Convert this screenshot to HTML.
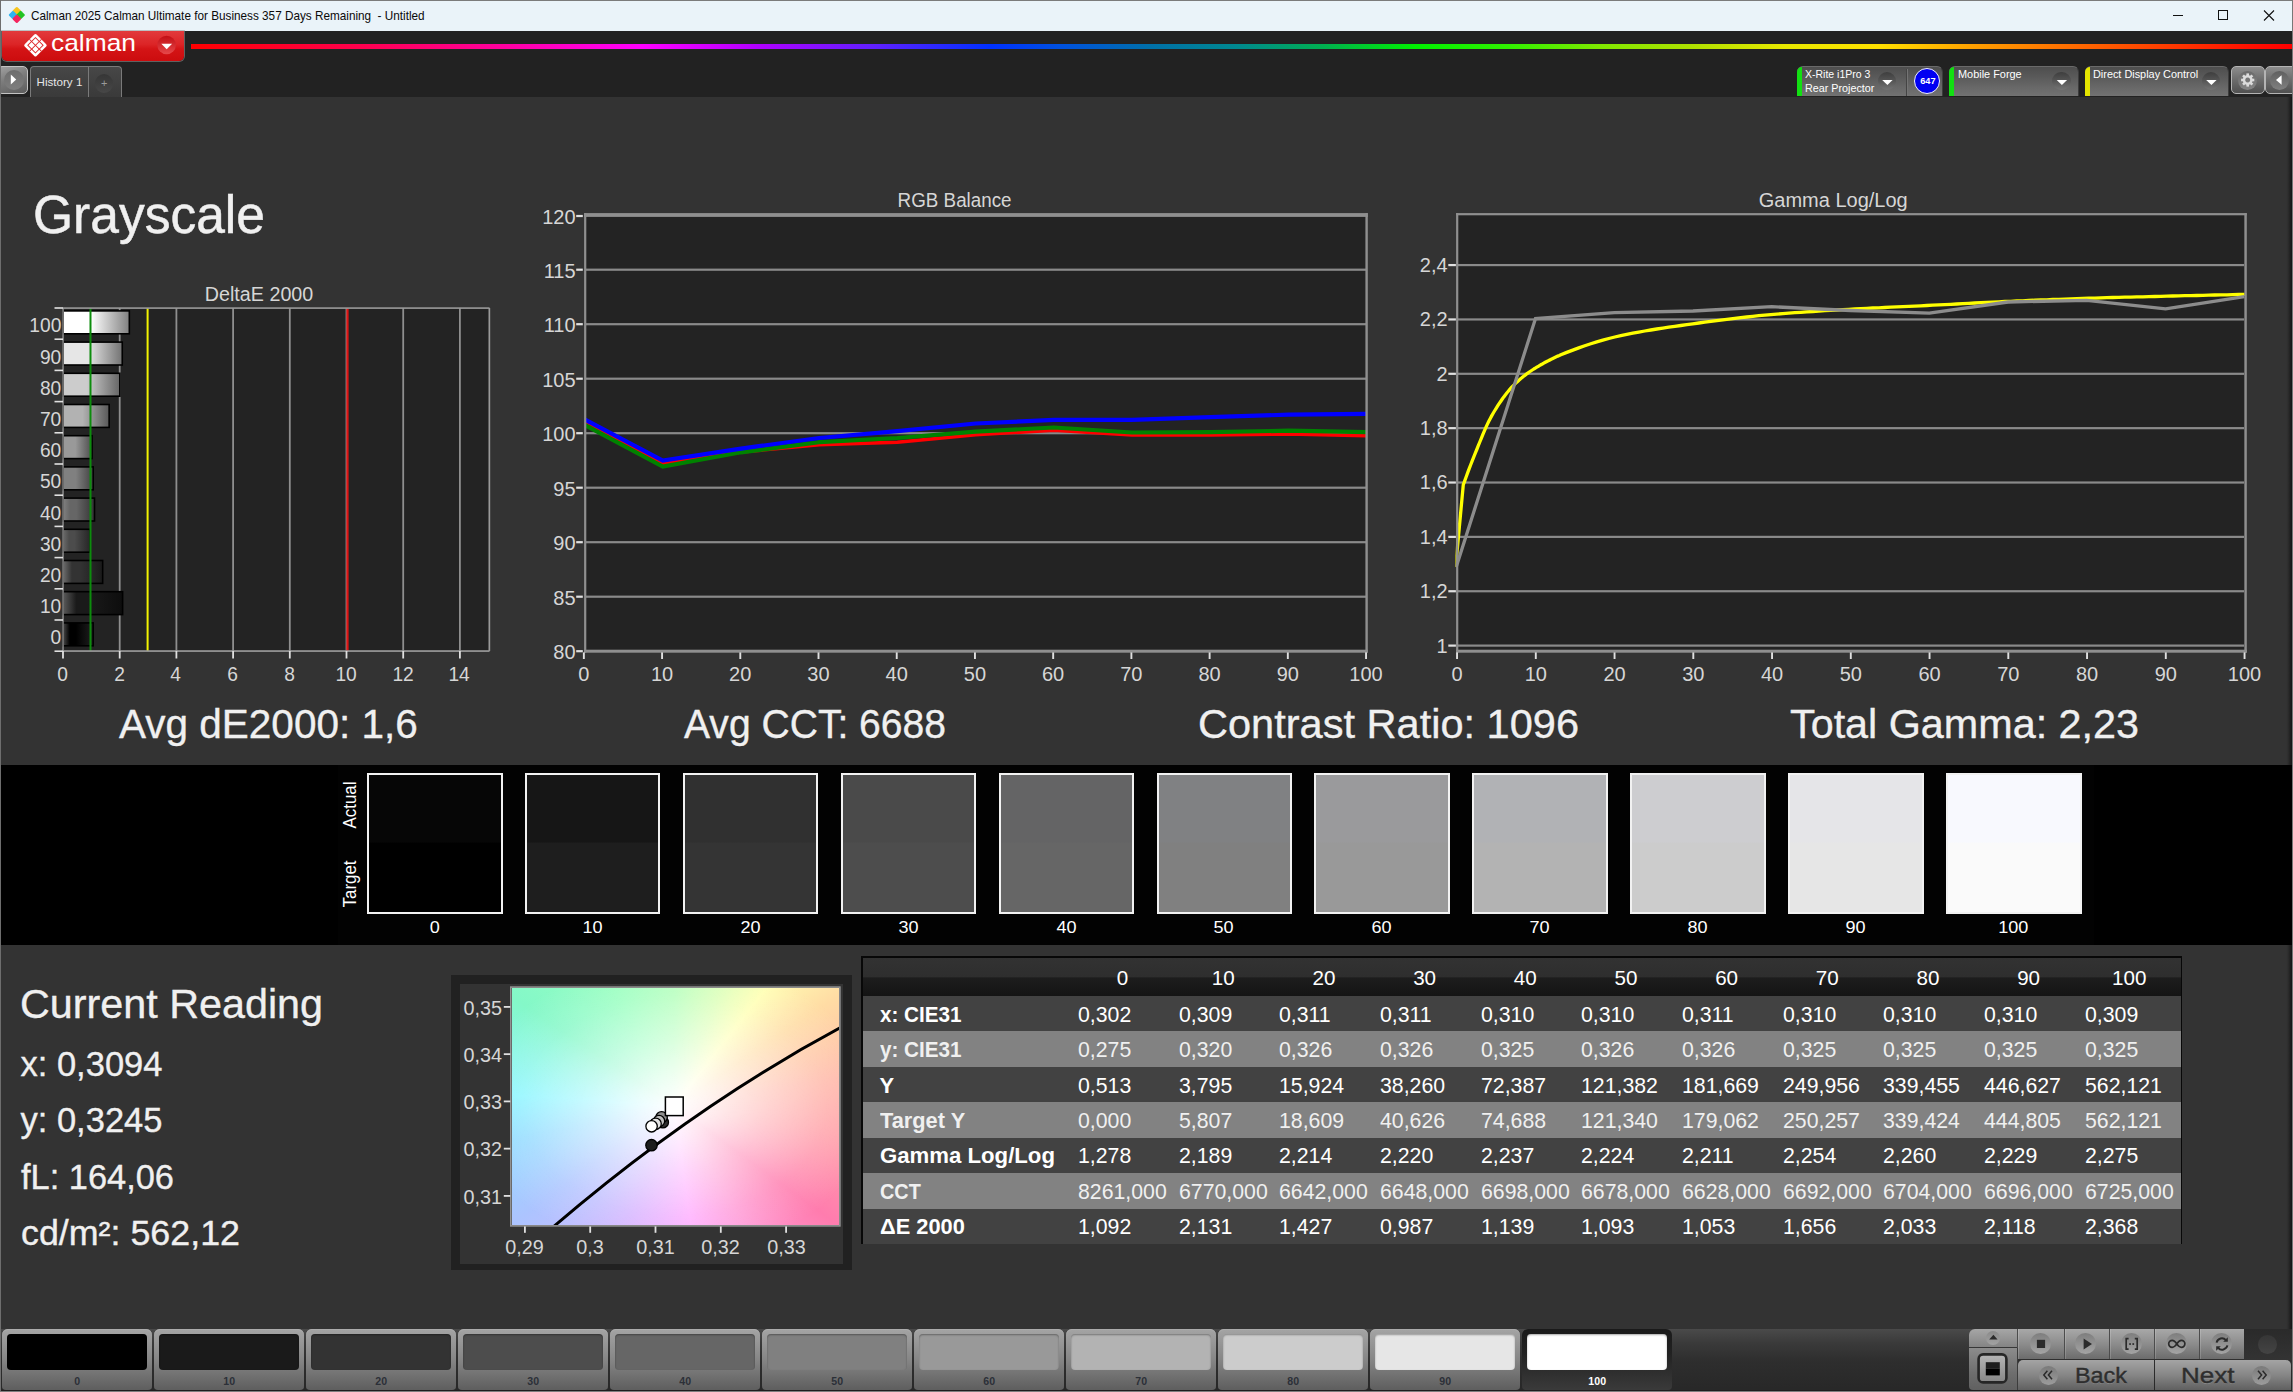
<!DOCTYPE html>
<html lang="en"><head><meta charset="utf-8"><title>Calman 2025 - Grayscale</title>
<style>
html,body{margin:0;padding:0;}
body{width:2293px;height:1392px;overflow:hidden;background:#333333;position:relative;
font-family:"Liberation Sans",sans-serif;}
.t{position:absolute;white-space:pre;display:block;z-index:10;}
.b{position:absolute;box-sizing:border-box;}
svg{position:absolute;left:0;top:0;overflow:visible;}
svg text{font-family:"Liberation Sans",sans-serif;}
</style></head><body>
<div class="b" style="left:0.00px;top:0.00px;width:2293.00px;height:31.00px;background:#eaf3f9;"></div>
<svg width="2293" height="40" viewBox="0 0 2293 40">
<g transform="translate(16.8,15) scale(0.9)">
<rect x="-3.6" y="-3.6" width="7.2" height="7.2" rx="1.2" transform="translate(0,-4.3) rotate(45)" fill="#f7c51e"/>
<rect x="-3.6" y="-3.6" width="7.2" height="7.2" rx="1.2" transform="translate(-4.3,0) rotate(45)" fill="#2fb4f0"/>
<rect x="-3.6" y="-3.6" width="7.2" height="7.2" rx="1.2" transform="translate(4.3,0) rotate(45)" fill="#22c322"/>
<rect x="-3.6" y="-3.6" width="7.2" height="7.2" rx="1.2" transform="translate(0,4.3) rotate(45)" fill="#f4245e"/>
</g>
<g stroke="#111" stroke-width="1" fill="none" shape-rendering="crispEdges">
<path d="M2173 15.5h10"/>
<rect x="2218.5" y="10.5" width="9" height="9" rx="1"/>
</g>
<path d="M2264 10.5l10 10M2274 10.5l-10 10" stroke="#111" stroke-width="1.1" fill="none"/>
</svg>
<span class="t" style="left:31.00px;top:9.67px;font-size:12.20px;line-height:12.20px;color:#0a0a0a;transform:scaleX(0.9636);transform-origin:left center;">Calman 2025 Calman Ultimate for Business 357 Days Remaining  - Untitled</span>
<div class="b" style="left:0.00px;top:31.00px;width:2293.00px;height:66.00px;background:#222222;"></div>
<div class="b" style="left:191.00px;top:43.50px;width:2101.00px;height:5.00px;background:linear-gradient(to right,#ff0000 0%,#ff0050 8.3%,#ff00a0 14.9%,#ff00ff 21.5%,#b000ff 27%,#6020ff 32.5%,#0030ff 38%,#0050e0 41.3%,#0070a8 45.7%,#008890 49.7%,#00b050 53.9%,#00f000 58.3%,#30f000 62.7%,#80e800 67.1%,#b0e000 71.5%,#e8e800 75.9%,#ffe000 80.3%,#ffa000 84.8%,#ff7000 89.1%,#ff4000 93.6%,#ff1000 98%,#ff0000 100%);"></div>
<div class="b" style="left:2.00px;top:31.00px;width:182.00px;height:30.00px;background:linear-gradient(to bottom,#e23a3c 0%,#dc2426 45%,#d41416 60%,#cc0c0e 100%);border-radius:0 0 5px 5px;box-shadow:0 0 0 1px rgba(150,150,150,.55);"></div>
<svg width="200" height="70" viewBox="0 0 200 70">
<defs><linearGradient id="ddg" x1="0" y1="0" x2="0" y2="1"><stop offset="0" stop-color="#c20e14"/><stop offset="1" stop-color="#e6484a"/></linearGradient></defs>
<g transform="translate(35.45,45.3) rotate(45)">
<rect x="-8.4" y="-8.4" width="16.8" height="16.8" rx="1.6" fill="#fff"/>
<g stroke="#dd282a" stroke-width="0.95" fill="none"><rect x="-5.4" y="-5.4" width="10.8" height="10.8"/><path d="M0,-8.6V8.6M-8.6,0H8.6"/></g>
</g>
<circle cx="166.6" cy="45" r="9.3" fill="url(#ddg)"/>
<path d="M161.3 43.8h10.8l-5.4 5.4z" fill="#fff"/>
</svg>
<span class="t" style="left:51.00px;top:31.26px;font-size:24.50px;line-height:24.50px;color:#ffffff;transform:scaleX(1.0762);transform-origin:left center;">calman</span>
<div class="b" style="left:-3.00px;top:66.00px;width:31.00px;height:28.00px;background:linear-gradient(160deg,#a2a2a2 0%,#7c7c7c 45%,#5c5c5c 100%);border:1px solid #c4c4c4;border-radius:5px;"></div>
<div class="b" style="left:4.00px;top:70.00px;width:20.00px;height:20.00px;border-radius:50%;background:linear-gradient(to bottom,#6e6e6e,#7e7e7e);"></div>
<svg width="40" height="100" viewBox="0 0 40 100"><path d="M10.8 74.6v9.8l5.4-4.9z" fill="#fff"/></svg>
<div class="b" style="left:30.00px;top:66.00px;width:92.00px;height:34.00px;background:linear-gradient(to bottom,#474747 0%,#3a3a3a 100%);border:1px solid #7a7a7a;border-bottom:none;border-radius:4px 4px 0 0;height:31px;"></div>
<div class="b" style="left:88.00px;top:67.00px;width:1.00px;height:30.00px;background:#7a7a7a;"></div>
<div class="b" style="left:95.00px;top:74.20px;width:18.40px;height:18.40px;border-radius:50%;background:linear-gradient(to bottom,#363636,#474747);"></div>
<span class="t" style="left:36.60px;top:76.18px;font-size:11.60px;line-height:11.60px;color:#e6e6e6;">History 1</span>
<span class="t" style="left:100.99px;top:77.89px;font-size:11.00px;line-height:11.00px;color:#9a9a9a;">+</span>
<div class="b" style="left:1796.50px;top:66.00px;width:146.50px;height:30.00px;background:linear-gradient(to bottom,#4e4e4e 0%,#5a5a5a 35%,#686868 70%,#727272 100%);border-radius:6px 6px 0 0;border-top:1px solid #6a6a6a;border-right:1px solid #3c3c3c;overflow:hidden;"></div>
<div class="b" style="left:1796.60px;top:66.50px;width:5.50px;height:29.50px;background:#12df12;border-radius:5px 0 0 0;"></div>
<div class="b" style="left:1877.90px;top:71.80px;width:18.60px;height:18.60px;border-radius:50%;background:linear-gradient(to bottom,#3e3e3e,#565656 50%,#747474);"></div>
<svg width="2293" height="100" viewBox="0 0 2293 100"><path d="M1882.2 80h10.4l-5.2 5z" fill="#fff"/></svg>
<span class="t" style="left:1804.60px;top:68.18px;font-size:11.60px;line-height:11.60px;color:#ffffff;transform:scaleX(0.9057);transform-origin:left center;">X-Rite i1Pro 3</span>
<span class="t" style="left:1804.60px;top:81.78px;font-size:11.60px;line-height:11.60px;color:#ffffff;transform:scaleX(0.9280);transform-origin:left center;">Rear Projector</span>
<div class="b" style="left:1906.00px;top:69.00px;width:1.20px;height:27.00px;background:#444444;"></div>
<div class="b" style="left:1907.20px;top:69.00px;width:1.00px;height:27.00px;background:#747474;"></div>
<div class="b" style="left:1914.00px;top:67.70px;width:26.00px;height:26.00px;border-radius:50%;background:#0000f2;border:1px solid #f0f0ff;"></div>
<span class="t" style="left:1919.56px;top:76.44px;font-size:9.40px;line-height:9.40px;color:#ffffff;font-weight:bold;transform:scaleX(0.9819);transform-origin:center center;">647</span>
<div class="b" style="left:1948.50px;top:66.00px;width:130.50px;height:30.00px;background:linear-gradient(to bottom,#4e4e4e 0%,#5a5a5a 35%,#686868 70%,#727272 100%);border-radius:6px 6px 0 0;border-top:1px solid #6a6a6a;border-right:1px solid #3c3c3c;overflow:hidden;"></div>
<div class="b" style="left:1948.60px;top:66.50px;width:5.50px;height:29.50px;background:#12df12;border-radius:5px 0 0 0;"></div>
<div class="b" style="left:2052.40px;top:71.80px;width:18.60px;height:18.60px;border-radius:50%;background:linear-gradient(to bottom,#3e3e3e,#565656 50%,#747474);"></div>
<svg width="2293" height="100" viewBox="0 0 2293 100"><path d="M2056.7000000000003 80h10.4l-5.2 5z" fill="#fff"/></svg>
<span class="t" style="left:1957.90px;top:68.18px;font-size:11.60px;line-height:11.60px;color:#ffffff;transform:scaleX(0.9410);transform-origin:left center;">Mobile Forge</span>
<div class="b" style="left:2084.50px;top:66.00px;width:144.00px;height:30.00px;background:linear-gradient(to bottom,#4e4e4e 0%,#5a5a5a 35%,#686868 70%,#727272 100%);border-radius:6px 6px 0 0;border-top:1px solid #6a6a6a;border-right:1px solid #3c3c3c;overflow:hidden;"></div>
<div class="b" style="left:2084.60px;top:66.50px;width:5.50px;height:29.50px;background:#e6e600;border-radius:5px 0 0 0;"></div>
<div class="b" style="left:2201.90px;top:71.80px;width:18.60px;height:18.60px;border-radius:50%;background:linear-gradient(to bottom,#3e3e3e,#565656 50%,#747474);"></div>
<svg width="2293" height="100" viewBox="0 0 2293 100"><path d="M2206.2000000000003 80h10.4l-5.2 5z" fill="#fff"/></svg>
<span class="t" style="left:2093.40px;top:68.18px;font-size:11.60px;line-height:11.60px;color:#ffffff;transform:scaleX(0.9379);transform-origin:left center;">Direct Display Control</span>
<div class="b" style="left:2231.00px;top:66.00px;width:34.00px;height:28.00px;background:linear-gradient(to bottom,#8c8c8c 0%,#6c6c6c 50%,#505050 100%);border:1px solid #b4b4b4;border-radius:5px;"></div>
<div class="b" style="left:2265.00px;top:66.00px;width:32.00px;height:28.00px;background:linear-gradient(to bottom,#8c8c8c 0%,#6c6c6c 50%,#505050 100%);border:1px solid #b4b4b4;border-radius:5px;"></div>
<div class="b" style="left:2238.20px;top:70.50px;width:19.00px;height:19.00px;border-radius:50%;background:linear-gradient(to bottom,#6a6a6a,#858585);"></div>
<div class="b" style="left:2269.50px;top:70.50px;width:19.00px;height:19.00px;border-radius:50%;background:linear-gradient(to bottom,#606060,#808080);"></div>
<svg width="2293" height="100" viewBox="0 0 2293 100"><g transform="translate(2247.7,80)" fill="#dcdcdc"><rect x="-1.3" y="-6.6" width="2.6" height="3.2" transform="rotate(0)"/><rect x="-1.3" y="-6.6" width="2.6" height="3.2" transform="rotate(45)"/><rect x="-1.3" y="-6.6" width="2.6" height="3.2" transform="rotate(90)"/><rect x="-1.3" y="-6.6" width="2.6" height="3.2" transform="rotate(135)"/><rect x="-1.3" y="-6.6" width="2.6" height="3.2" transform="rotate(180)"/><rect x="-1.3" y="-6.6" width="2.6" height="3.2" transform="rotate(225)"/><rect x="-1.3" y="-6.6" width="2.6" height="3.2" transform="rotate(270)"/><rect x="-1.3" y="-6.6" width="2.6" height="3.2" transform="rotate(315)"/><path fill-rule="evenodd" d="M0,-4.9a4.9,4.9 0 1 0 0.001,0z M0,-2.5a2.5,2.5 0 1 1 -0.001,0z"/></g><path d="M2281.6 75.2v9.6l-5.6-4.8z" fill="#fff"/></svg>
<svg style="z-index:5" width="2293" height="1392" viewBox="0 0 2293 1392"><defs><linearGradient id="bg0" x1="0" y1="0" x2="1" y2="0"><stop offset="0" stop-color="#474747"/><stop offset="0.22" stop-color="#000000"/><stop offset="0.42" stop-color="#000000"/><stop offset="1" stop-color="#1f1f1f"/></linearGradient><linearGradient id="bg10" x1="0" y1="0" x2="1" y2="0"><stop offset="0" stop-color="#5a5a5a"/><stop offset="0.22" stop-color="#1a1a1a"/><stop offset="0.42" stop-color="#1a1a1a"/><stop offset="1" stop-color="#0d0d0d"/></linearGradient><linearGradient id="bg20" x1="0" y1="0" x2="1" y2="0"><stop offset="0" stop-color="#6c6c6c"/><stop offset="0.22" stop-color="#333333"/><stop offset="0.42" stop-color="#333333"/><stop offset="1" stop-color="#1a1a1a"/></linearGradient><linearGradient id="bg30" x1="0" y1="0" x2="1" y2="0"><stop offset="0" stop-color="#6a6a6a"/><stop offset="0.22" stop-color="#4c4c4c"/><stop offset="0.42" stop-color="#4c4c4c"/><stop offset="1" stop-color="#262626"/></linearGradient><linearGradient id="bg40" x1="0" y1="0" x2="1" y2="0"><stop offset="0" stop-color="#808080"/><stop offset="0.22" stop-color="#666666"/><stop offset="0.42" stop-color="#666666"/><stop offset="1" stop-color="#333333"/></linearGradient><linearGradient id="bg50" x1="0" y1="0" x2="1" y2="0"><stop offset="0" stop-color="#808080"/><stop offset="0.22" stop-color="#808080"/><stop offset="0.42" stop-color="#808080"/><stop offset="1" stop-color="#404040"/></linearGradient><linearGradient id="bg60" x1="0" y1="0" x2="1" y2="0"><stop offset="0" stop-color="#999999"/><stop offset="0.22" stop-color="#999999"/><stop offset="0.42" stop-color="#999999"/><stop offset="1" stop-color="#4c4c4c"/></linearGradient><linearGradient id="bg70" x1="0" y1="0" x2="1" y2="0"><stop offset="0" stop-color="#b2b2b2"/><stop offset="0.22" stop-color="#b2b2b2"/><stop offset="0.42" stop-color="#b2b2b2"/><stop offset="1" stop-color="#595959"/></linearGradient><linearGradient id="bg80" x1="0" y1="0" x2="1" y2="0"><stop offset="0" stop-color="#cccccc"/><stop offset="0.22" stop-color="#cccccc"/><stop offset="0.42" stop-color="#cccccc"/><stop offset="1" stop-color="#666666"/></linearGradient><linearGradient id="bg90" x1="0" y1="0" x2="1" y2="0"><stop offset="0" stop-color="#e6e6e6"/><stop offset="0.22" stop-color="#e6e6e6"/><stop offset="0.42" stop-color="#e6e6e6"/><stop offset="1" stop-color="#737373"/></linearGradient><linearGradient id="bg100" x1="0" y1="0" x2="1" y2="0"><stop offset="0" stop-color="#ffffff"/><stop offset="0.22" stop-color="#ffffff"/><stop offset="0.42" stop-color="#ffffff"/><stop offset="1" stop-color="#808080"/></linearGradient><clipPath id="rgbclip"><rect x="585.0" y="216.0" width="782.0" height="435.0"/></clipPath><clipPath id="gclip"><rect x="1455.5" y="216.0" width="790.0" height="435.0"/></clipPath><clipPath id="cclip"><rect x="511.5" y="987.8" width="327.70000000000005" height="237.4000000000001"/></clipPath></defs><rect x="63.0" y="308.0" width="426.5" height="343.0" fill="#232323"/><rect x="118.80" y="308.0" width="1.8" height="343.0" fill="#8e8e8e"/><rect x="175.50" y="308.0" width="1.8" height="343.0" fill="#8e8e8e"/><rect x="232.20" y="308.0" width="1.8" height="343.0" fill="#8e8e8e"/><rect x="288.90" y="308.0" width="1.8" height="343.0" fill="#8e8e8e"/><rect x="345.60" y="308.0" width="1.8" height="343.0" fill="#8e8e8e"/><rect x="402.30" y="308.0" width="1.8" height="343.0" fill="#8e8e8e"/><rect x="459.00" y="308.0" width="1.8" height="343.0" fill="#8e8e8e"/><rect x="63.20" y="622.90" width="29.96" height="22.9" fill="url(#bg0)" stroke="#000" stroke-width="1.6"/><rect x="63.20" y="591.70" width="59.41" height="22.9" fill="url(#bg10)" stroke="#000" stroke-width="1.6"/><rect x="63.20" y="560.50" width="39.46" height="22.9" fill="url(#bg20)" stroke="#000" stroke-width="1.6"/><rect x="63.20" y="529.30" width="26.98" height="22.9" fill="url(#bg30)" stroke="#000" stroke-width="1.6"/><rect x="63.20" y="498.10" width="31.29" height="22.9" fill="url(#bg40)" stroke="#000" stroke-width="1.6"/><rect x="63.20" y="466.90" width="29.99" height="22.9" fill="url(#bg50)" stroke="#000" stroke-width="1.6"/><rect x="63.20" y="435.70" width="28.85" height="22.9" fill="url(#bg60)" stroke="#000" stroke-width="1.6"/><rect x="63.20" y="404.50" width="45.95" height="22.9" fill="url(#bg70)" stroke="#000" stroke-width="1.6"/><rect x="63.20" y="373.30" width="56.64" height="22.9" fill="url(#bg80)" stroke="#000" stroke-width="1.6"/><rect x="63.20" y="342.10" width="59.05" height="22.9" fill="url(#bg90)" stroke="#000" stroke-width="1.6"/><rect x="63.20" y="310.90" width="66.13" height="22.9" fill="url(#bg100)" stroke="#000" stroke-width="1.6"/><rect x="89.5" y="308.0" width="2" height="343.0" fill="#0c8c0c"/><rect x="146.6" y="308.0" width="2" height="343.0" fill="#f2f200"/><rect x="346.4" y="308.0" width="2.2" height="343.0" fill="#e01414"/><rect x="63.0" y="307.3" width="426.5" height="1.6" fill="#9a9a9a"/><rect x="488.5" y="308.0" width="1.7" height="343.0" fill="#9a9a9a"/><rect x="62.4" y="308.0" width="1.3" height="343.0" fill="#9a9a9a"/><rect x="63.0" y="650.2" width="426.5" height="1.7" fill="#9a9a9a"/><rect x="54.5" y="307.20" width="8.5" height="1.6" fill="#e0e0e0"/><rect x="54.5" y="338.40" width="8.5" height="1.6" fill="#e0e0e0"/><rect x="54.5" y="369.60" width="8.5" height="1.6" fill="#e0e0e0"/><rect x="54.5" y="400.80" width="8.5" height="1.6" fill="#e0e0e0"/><rect x="54.5" y="432.00" width="8.5" height="1.6" fill="#e0e0e0"/><rect x="54.5" y="463.20" width="8.5" height="1.6" fill="#e0e0e0"/><rect x="54.5" y="494.40" width="8.5" height="1.6" fill="#e0e0e0"/><rect x="54.5" y="525.60" width="8.5" height="1.6" fill="#e0e0e0"/><rect x="54.5" y="556.80" width="8.5" height="1.6" fill="#e0e0e0"/><rect x="54.5" y="588.00" width="8.5" height="1.6" fill="#e0e0e0"/><rect x="54.5" y="619.20" width="8.5" height="1.6" fill="#e0e0e0"/><rect x="54.5" y="650.40" width="8.5" height="1.6" fill="#e0e0e0"/><rect x="62.10" y="651.0" width="1.8" height="7.5" fill="#e0e0e0"/><rect x="118.80" y="651.0" width="1.8" height="7.5" fill="#e0e0e0"/><rect x="175.50" y="651.0" width="1.8" height="7.5" fill="#e0e0e0"/><rect x="232.20" y="651.0" width="1.8" height="7.5" fill="#e0e0e0"/><rect x="288.90" y="651.0" width="1.8" height="7.5" fill="#e0e0e0"/><rect x="345.60" y="651.0" width="1.8" height="7.5" fill="#e0e0e0"/><rect x="402.30" y="651.0" width="1.8" height="7.5" fill="#e0e0e0"/><rect x="459.00" y="651.0" width="1.8" height="7.5" fill="#e0e0e0"/><rect x="585.0" y="214.0" width="781.0" height="437.0" fill="#232323"/><rect x="585.0" y="595.60" width="781.0" height="2.2" fill="#8a8a8a"/><rect x="585.0" y="541.10" width="781.0" height="2.2" fill="#8a8a8a"/><rect x="585.0" y="486.60" width="781.0" height="2.2" fill="#8a8a8a"/><rect x="585.0" y="432.10" width="781.0" height="2.2" fill="#8a8a8a"/><rect x="585.0" y="377.60" width="781.0" height="2.2" fill="#8a8a8a"/><rect x="585.0" y="323.10" width="781.0" height="2.2" fill="#8a8a8a"/><rect x="585.0" y="268.60" width="781.0" height="2.2" fill="#8a8a8a"/><polyline points="584.6,422.6 662.8,463.8 741.0,452.0 819.2,444.6 897.4,442.2 975.6,434.7 1053.8,430.3 1132.0,434.9 1210.2,434.9 1288.4,434.0 1366.6,435.8" fill="none" stroke="#ff0000" stroke-width="3.6" stroke-linejoin="miter" clip-path="url(#rgbclip)"/><polyline points="584.6,424.8 662.8,466.6 741.0,452.3 819.2,442.2 897.4,438.0 975.6,431.6 1053.8,427.5 1132.0,432.5 1210.2,432.1 1288.4,430.7 1366.6,432.1" fill="none" stroke="#008200" stroke-width="4.2" stroke-linejoin="miter" clip-path="url(#rgbclip)"/><polyline points="584.6,419.3 662.8,460.5 741.0,448.6 819.2,438.0 897.4,431.2 975.6,423.5 1053.8,419.9 1132.0,419.9 1210.2,417.1 1288.4,414.7 1366.6,413.8" fill="none" stroke="#0000ff" stroke-width="4.2" stroke-linejoin="miter" clip-path="url(#rgbclip)"/><rect x="584.1" y="213.10" width="783.7" height="3.8" fill="#8f8f8f"/><rect x="1365.4" y="213.10" width="2.4" height="439.6" fill="#8f8f8f"/><rect x="584.1" y="213.10" width="2.2" height="439.6" fill="#8f8f8f"/><rect x="584.1" y="649.70" width="783.7" height="3.0" fill="#8f8f8f"/><rect x="576.2" y="650.10" width="6.6" height="2.2" fill="#e0e0e0"/><rect x="576.2" y="595.60" width="6.6" height="2.2" fill="#e0e0e0"/><rect x="576.2" y="541.10" width="6.6" height="2.2" fill="#e0e0e0"/><rect x="576.2" y="486.60" width="6.6" height="2.2" fill="#e0e0e0"/><rect x="576.2" y="432.10" width="6.6" height="2.2" fill="#e0e0e0"/><rect x="576.2" y="377.60" width="6.6" height="2.2" fill="#e0e0e0"/><rect x="576.2" y="323.10" width="6.6" height="2.2" fill="#e0e0e0"/><rect x="576.2" y="268.60" width="6.6" height="2.2" fill="#e0e0e0"/><rect x="576.2" y="214.90" width="6.6" height="2.2" fill="#e0e0e0"/><rect x="582.90" y="652.4" width="1.9" height="6.6" fill="#e0e0e0"/><rect x="661.12" y="652.4" width="1.9" height="6.6" fill="#e0e0e0"/><rect x="739.34" y="652.4" width="1.9" height="6.6" fill="#e0e0e0"/><rect x="817.56" y="652.4" width="1.9" height="6.6" fill="#e0e0e0"/><rect x="895.78" y="652.4" width="1.9" height="6.6" fill="#e0e0e0"/><rect x="974.00" y="652.4" width="1.9" height="6.6" fill="#e0e0e0"/><rect x="1052.22" y="652.4" width="1.9" height="6.6" fill="#e0e0e0"/><rect x="1130.44" y="652.4" width="1.9" height="6.6" fill="#e0e0e0"/><rect x="1208.66" y="652.4" width="1.9" height="6.6" fill="#e0e0e0"/><rect x="1286.88" y="652.4" width="1.9" height="6.6" fill="#e0e0e0"/><rect x="1365.10" y="652.4" width="1.9" height="6.6" fill="#e0e0e0"/><rect x="1457.0" y="214.0" width="787.0" height="437.0" fill="#232323"/><rect x="1457.0" y="644.50" width="787.0" height="2.2" fill="#8a8a8a"/><rect x="1457.0" y="590.14" width="787.0" height="2.2" fill="#8a8a8a"/><rect x="1457.0" y="535.78" width="787.0" height="2.2" fill="#8a8a8a"/><rect x="1457.0" y="481.42" width="787.0" height="2.2" fill="#8a8a8a"/><rect x="1457.0" y="427.06" width="787.0" height="2.2" fill="#8a8a8a"/><rect x="1457.0" y="372.70" width="787.0" height="2.2" fill="#8a8a8a"/><rect x="1457.0" y="318.34" width="787.0" height="2.2" fill="#8a8a8a"/><rect x="1457.0" y="263.98" width="787.0" height="2.2" fill="#8a8a8a"/><polyline points="1455.6,567.0 1463.3,484.7 1464.8,480.6 1466.3,476.5 1467.8,472.4 1469.3,468.4 1470.8,464.5 1472.3,460.6 1473.8,456.9 1475.3,453.1 1476.8,449.5 1478.3,445.7 1479.8,442.0 1481.3,438.4 1482.8,434.7 1484.3,431.2 1485.8,427.7 1487.3,424.4 1488.8,421.3 1490.3,418.4 1491.8,415.6 1493.3,413.0 1494.8,410.5 1496.3,408.1 1497.8,405.7 1499.3,403.4 1500.8,401.2 1502.3,399.0 1503.8,396.9 1505.3,394.9 1506.8,393.0 1508.3,391.2 1509.8,389.4 1511.3,387.7 1512.8,386.1 1514.3,384.6 1515.8,383.1 1517.3,381.7 1518.8,380.4 1520.3,379.0 1521.8,377.8 1523.3,376.5 1524.8,375.4 1526.3,374.2 1527.8,373.1 1529.3,372.0 1530.8,371.0 1532.3,370.0 1533.8,369.0 1535.3,368.1 1536.8,367.2 1538.3,366.3 1539.8,365.4 1541.3,364.5 1542.8,363.7 1544.3,362.8 1545.8,362.0 1547.3,361.2 1548.8,360.5 1550.3,359.7 1551.8,358.9 1553.3,358.2 1554.8,357.5 1556.3,356.8 1557.8,356.1 1559.3,355.5 1560.8,354.8 1566.8,352.4 1572.8,350.1 1578.8,347.9 1584.8,345.8 1590.8,343.8 1596.8,341.9 1602.8,340.2 1608.8,338.5 1614.8,337.0 1620.8,335.6 1626.8,334.4 1632.8,333.2 1638.8,332.1 1644.8,331.0 1650.8,330.0 1656.8,329.0 1662.8,328.1 1668.8,327.2 1674.8,326.3 1680.8,325.5 1686.8,324.6 1692.8,323.8 1698.8,323.0 1704.8,322.2 1710.8,321.4 1716.8,320.6 1722.8,319.8 1728.8,319.1 1734.8,318.3 1740.8,317.6 1746.8,317.0 1752.8,316.3 1758.8,315.7 1764.8,315.1 1770.8,314.6 1776.8,314.1 1782.8,313.6 1788.8,313.1 1794.8,312.7 1800.8,312.3 1806.8,311.9 1812.8,311.5 1818.8,311.1 1824.8,310.7 1830.8,310.3 1836.8,310.0 1842.8,309.6 1848.8,309.3 1854.8,309.0 1860.8,308.6 1866.8,308.3 1872.8,308.0 1878.8,307.8 1884.8,307.5 1890.8,307.2 1896.8,306.9 1902.8,306.6 1908.8,306.4 1914.8,306.1 1920.8,305.8 1926.8,305.5 1932.8,305.2 1938.8,304.9 1944.8,304.6 1950.8,304.3 1956.8,304.0 1962.8,303.7 1968.8,303.3 1974.8,303.0 1980.8,302.7 1986.8,302.4 1992.8,302.1 1998.8,301.8 2004.8,301.5 2010.8,301.3 2016.8,301.0 2022.8,300.8 2028.8,300.5 2034.8,300.2 2040.8,300.0 2046.8,299.8 2052.8,299.5 2058.8,299.3 2064.8,299.1 2070.8,298.8 2076.8,298.6 2082.8,298.4 2088.8,298.2 2094.8,298.1 2100.8,297.9 2106.8,297.7 2112.8,297.5 2118.8,297.4 2124.8,297.2 2130.8,297.1 2136.8,296.9 2142.8,296.8 2148.8,296.6 2154.8,296.5 2160.8,296.3 2166.8,296.2 2172.8,296.0 2178.8,295.9 2184.8,295.7 2190.8,295.6 2196.8,295.5 2202.8,295.3 2208.8,295.2 2214.8,295.0 2220.8,294.9 2226.8,294.8 2232.8,294.6 2238.8,294.5 2244.6,294.4" fill="none" stroke="#ffff00" stroke-width="3.3" stroke-linejoin="round" clip-path="url(#gclip)"/><polyline points="1456.2,567.0 1535.5,318.6 1614.3,312.6 1693.0,311.0 1771.8,306.7 1850.5,310.5 1929.3,313.2 2008.0,302.0 2086.8,300.4 2165.6,308.8 2244.3,296.6" fill="none" stroke="#8c8c8c" stroke-width="3.3" stroke-linejoin="miter" clip-path="url(#gclip)"/><rect x="1456.1" y="213.10" width="790.7" height="2.2" fill="#8f8f8f"/><rect x="2244.4" y="213.10" width="2.4" height="439.6" fill="#8f8f8f"/><rect x="1456.1" y="213.10" width="2.2" height="439.6" fill="#8f8f8f"/><rect x="1456.1" y="649.70" width="790.7" height="3.0" fill="#8f8f8f"/><rect x="1448.3" y="644.50" width="7.6" height="2.2" fill="#e0e0e0"/><rect x="1448.3" y="590.14" width="7.6" height="2.2" fill="#e0e0e0"/><rect x="1448.3" y="535.78" width="7.6" height="2.2" fill="#e0e0e0"/><rect x="1448.3" y="481.42" width="7.6" height="2.2" fill="#e0e0e0"/><rect x="1448.3" y="427.06" width="7.6" height="2.2" fill="#e0e0e0"/><rect x="1448.3" y="372.70" width="7.6" height="2.2" fill="#e0e0e0"/><rect x="1448.3" y="318.34" width="7.6" height="2.2" fill="#e0e0e0"/><rect x="1448.3" y="263.98" width="7.6" height="2.2" fill="#e0e0e0"/><rect x="1456.10" y="652.4" width="1.9" height="6.6" fill="#e0e0e0"/><rect x="1534.85" y="652.4" width="1.9" height="6.6" fill="#e0e0e0"/><rect x="1613.60" y="652.4" width="1.9" height="6.6" fill="#e0e0e0"/><rect x="1692.35" y="652.4" width="1.9" height="6.6" fill="#e0e0e0"/><rect x="1771.10" y="652.4" width="1.9" height="6.6" fill="#e0e0e0"/><rect x="1849.85" y="652.4" width="1.9" height="6.6" fill="#e0e0e0"/><rect x="1928.60" y="652.4" width="1.9" height="6.6" fill="#e0e0e0"/><rect x="2007.35" y="652.4" width="1.9" height="6.6" fill="#e0e0e0"/><rect x="2086.10" y="652.4" width="1.9" height="6.6" fill="#e0e0e0"/><rect x="2164.85" y="652.4" width="1.9" height="6.6" fill="#e0e0e0"/><rect x="2243.60" y="652.4" width="1.9" height="6.6" fill="#e0e0e0"/><path d="M553.6,1226.6 Q694,1106 840.5,1027.6" fill="none" stroke="#000" stroke-width="3" clip-path="url(#cclip)"/><rect x="510.8" y="987.0999999999999" width="329.1" height="238.8000000000001" fill="none" stroke="#929292" stroke-width="1.6"/><circle cx="651.5" cy="1145.2" r="5.7" fill="#1c1c1c" stroke="#000" stroke-width="1.3"/><circle cx="662.8" cy="1122.2" r="5.7" fill="#2e2e2e" stroke="#000" stroke-width="1.3"/><circle cx="661.6" cy="1117.3" r="5.7" fill="#8e8e8e" stroke="#000" stroke-width="1.3"/><circle cx="659.0" cy="1121.0" r="5.7" fill="#c0c0c0" stroke="#000" stroke-width="1.3"/><circle cx="655.6" cy="1123.8" r="5.7" fill="#e4e4e4" stroke="#000" stroke-width="1.3"/><circle cx="651.6" cy="1126.3" r="5.7" fill="#ffffff" stroke="#000" stroke-width="1.3"/><rect x="665.4" y="1097" width="17.8" height="18.6" fill="#ffffff" stroke="#000" stroke-width="1.5"/><rect x="503.8" y="1006.00" width="6.5" height="1.8" fill="#e0e0e0"/><rect x="503.8" y="1053.25" width="6.5" height="1.8" fill="#e0e0e0"/><rect x="503.8" y="1100.50" width="6.5" height="1.8" fill="#e0e0e0"/><rect x="503.8" y="1147.75" width="6.5" height="1.8" fill="#e0e0e0"/><rect x="503.8" y="1195.00" width="6.5" height="1.8" fill="#e0e0e0"/><rect x="524.00" y="1226.4" width="1.8" height="6.4" fill="#e0e0e0"/><rect x="589.30" y="1226.4" width="1.8" height="6.4" fill="#e0e0e0"/><rect x="654.60" y="1226.4" width="1.8" height="6.4" fill="#e0e0e0"/><rect x="719.90" y="1226.4" width="1.8" height="6.4" fill="#e0e0e0"/><rect x="785.20" y="1226.4" width="1.8" height="6.4" fill="#e0e0e0"/></svg>
<span class="t" style="left:33.30px;top:187.57px;font-size:53.20px;line-height:53.20px;color:#f0f0f0;transform:scaleX(0.9688);transform-origin:left center;-webkit-text-stroke:0.5px #f0f0f0;">Grayscale</span>
<span class="t" style="left:119.00px;top:703.52px;font-size:40.50px;line-height:40.50px;color:#f0f0f0;-webkit-text-stroke:0.35px #f0f0f0;">Avg dE2000: 1,6</span>
<span class="t" style="left:683.50px;top:703.52px;font-size:40.50px;line-height:40.50px;color:#f0f0f0;transform:scaleX(0.9645);transform-origin:left center;-webkit-text-stroke:0.35px #f0f0f0;">Avg CCT: 6688</span>
<span class="t" style="left:1197.50px;top:703.52px;font-size:40.50px;line-height:40.50px;color:#f0f0f0;transform:scaleX(1.0257);transform-origin:left center;-webkit-text-stroke:0.35px #f0f0f0;">Contrast Ratio: 1096</span>
<span class="t" style="left:1789.50px;top:703.52px;font-size:40.50px;line-height:40.50px;color:#f0f0f0;transform:scaleX(1.0200);transform-origin:left center;-webkit-text-stroke:0.35px #f0f0f0;">Total Gamma: 2,23</span>
<span class="t" style="left:56.94px;top:663.87px;font-size:20.00px;line-height:20.00px;color:#d6d6d6;transform:scaleX(0.9600);transform-origin:center center;">0</span>
<span class="t" style="left:113.64px;top:663.87px;font-size:20.00px;line-height:20.00px;color:#d6d6d6;transform:scaleX(0.9600);transform-origin:center center;">2</span>
<span class="t" style="left:170.34px;top:663.87px;font-size:20.00px;line-height:20.00px;color:#d6d6d6;transform:scaleX(0.9600);transform-origin:center center;">4</span>
<span class="t" style="left:227.04px;top:663.87px;font-size:20.00px;line-height:20.00px;color:#d6d6d6;transform:scaleX(0.9600);transform-origin:center center;">6</span>
<span class="t" style="left:283.74px;top:663.87px;font-size:20.00px;line-height:20.00px;color:#d6d6d6;transform:scaleX(0.9600);transform-origin:center center;">8</span>
<span class="t" style="left:334.88px;top:663.87px;font-size:20.00px;line-height:20.00px;color:#d6d6d6;transform:scaleX(0.9600);transform-origin:center center;">10</span>
<span class="t" style="left:391.58px;top:663.87px;font-size:20.00px;line-height:20.00px;color:#d6d6d6;transform:scaleX(0.9600);transform-origin:center center;">12</span>
<span class="t" style="left:448.28px;top:663.87px;font-size:20.00px;line-height:20.00px;color:#d6d6d6;transform:scaleX(0.9600);transform-origin:center center;">14</span>
<span class="t" style="left:49.88px;top:627.47px;font-size:20.00px;line-height:20.00px;color:#d6d6d6;transform:scaleX(0.9600);transform-origin:right center;">0</span>
<span class="t" style="left:38.75px;top:596.27px;font-size:20.00px;line-height:20.00px;color:#d6d6d6;transform:scaleX(0.9600);transform-origin:right center;">10</span>
<span class="t" style="left:38.75px;top:565.07px;font-size:20.00px;line-height:20.00px;color:#d6d6d6;transform:scaleX(0.9600);transform-origin:right center;">20</span>
<span class="t" style="left:38.75px;top:533.87px;font-size:20.00px;line-height:20.00px;color:#d6d6d6;transform:scaleX(0.9600);transform-origin:right center;">30</span>
<span class="t" style="left:38.75px;top:502.67px;font-size:20.00px;line-height:20.00px;color:#d6d6d6;transform:scaleX(0.9600);transform-origin:right center;">40</span>
<span class="t" style="left:38.75px;top:471.47px;font-size:20.00px;line-height:20.00px;color:#d6d6d6;transform:scaleX(0.9600);transform-origin:right center;">50</span>
<span class="t" style="left:38.75px;top:440.27px;font-size:20.00px;line-height:20.00px;color:#d6d6d6;transform:scaleX(0.9600);transform-origin:right center;">60</span>
<span class="t" style="left:38.75px;top:409.07px;font-size:20.00px;line-height:20.00px;color:#d6d6d6;transform:scaleX(0.9600);transform-origin:right center;">70</span>
<span class="t" style="left:38.75px;top:377.87px;font-size:20.00px;line-height:20.00px;color:#d6d6d6;transform:scaleX(0.9600);transform-origin:right center;">80</span>
<span class="t" style="left:38.75px;top:346.67px;font-size:20.00px;line-height:20.00px;color:#d6d6d6;transform:scaleX(0.9600);transform-origin:right center;">90</span>
<span class="t" style="left:27.63px;top:315.47px;font-size:20.00px;line-height:20.00px;color:#d6d6d6;transform:scaleX(0.9600);transform-origin:right center;">100</span>
<span class="t" style="left:203.66px;top:284.47px;font-size:20.00px;line-height:20.00px;color:#d6d6d6;transform:scaleX(0.9857);transform-origin:center center;">DeltaE 2000</span>
<span class="t" style="left:553.35px;top:642.27px;font-size:20.00px;line-height:20.00px;color:#d6d6d6;">80</span>
<span class="t" style="left:553.35px;top:587.77px;font-size:20.00px;line-height:20.00px;color:#d6d6d6;">85</span>
<span class="t" style="left:553.35px;top:533.27px;font-size:20.00px;line-height:20.00px;color:#d6d6d6;">90</span>
<span class="t" style="left:553.35px;top:478.77px;font-size:20.00px;line-height:20.00px;color:#d6d6d6;">95</span>
<span class="t" style="left:542.23px;top:424.27px;font-size:20.00px;line-height:20.00px;color:#d6d6d6;">100</span>
<span class="t" style="left:542.23px;top:369.77px;font-size:20.00px;line-height:20.00px;color:#d6d6d6;">105</span>
<span class="t" style="left:543.72px;top:315.27px;font-size:20.00px;line-height:20.00px;color:#d6d6d6;">110</span>
<span class="t" style="left:543.72px;top:260.77px;font-size:20.00px;line-height:20.00px;color:#d6d6d6;">115</span>
<span class="t" style="left:542.23px;top:207.07px;font-size:20.00px;line-height:20.00px;color:#d6d6d6;">120</span>
<span class="t" style="left:578.24px;top:664.07px;font-size:20.00px;line-height:20.00px;color:#d6d6d6;">0</span>
<span class="t" style="left:650.90px;top:664.07px;font-size:20.00px;line-height:20.00px;color:#d6d6d6;">10</span>
<span class="t" style="left:729.12px;top:664.07px;font-size:20.00px;line-height:20.00px;color:#d6d6d6;">20</span>
<span class="t" style="left:807.34px;top:664.07px;font-size:20.00px;line-height:20.00px;color:#d6d6d6;">30</span>
<span class="t" style="left:885.56px;top:664.07px;font-size:20.00px;line-height:20.00px;color:#d6d6d6;">40</span>
<span class="t" style="left:963.78px;top:664.07px;font-size:20.00px;line-height:20.00px;color:#d6d6d6;">50</span>
<span class="t" style="left:1042.00px;top:664.07px;font-size:20.00px;line-height:20.00px;color:#d6d6d6;">60</span>
<span class="t" style="left:1120.22px;top:664.07px;font-size:20.00px;line-height:20.00px;color:#d6d6d6;">70</span>
<span class="t" style="left:1198.44px;top:664.07px;font-size:20.00px;line-height:20.00px;color:#d6d6d6;">80</span>
<span class="t" style="left:1276.66px;top:664.07px;font-size:20.00px;line-height:20.00px;color:#d6d6d6;">90</span>
<span class="t" style="left:1349.32px;top:664.07px;font-size:20.00px;line-height:20.00px;color:#d6d6d6;">100</span>
<span class="t" style="left:893.91px;top:190.07px;font-size:20.00px;line-height:20.00px;color:#d6d6d6;transform:scaleX(0.9408);transform-origin:center center;">RGB Balance</span>
<span class="t" style="left:1436.48px;top:635.57px;font-size:20.00px;line-height:20.00px;color:#d6d6d6;">1</span>
<span class="t" style="left:1419.80px;top:581.21px;font-size:20.00px;line-height:20.00px;color:#d6d6d6;">1,2</span>
<span class="t" style="left:1419.80px;top:526.85px;font-size:20.00px;line-height:20.00px;color:#d6d6d6;">1,4</span>
<span class="t" style="left:1419.80px;top:472.49px;font-size:20.00px;line-height:20.00px;color:#d6d6d6;">1,6</span>
<span class="t" style="left:1419.80px;top:418.13px;font-size:20.00px;line-height:20.00px;color:#d6d6d6;">1,8</span>
<span class="t" style="left:1436.48px;top:363.77px;font-size:20.00px;line-height:20.00px;color:#d6d6d6;">2</span>
<span class="t" style="left:1419.80px;top:309.41px;font-size:20.00px;line-height:20.00px;color:#d6d6d6;">2,2</span>
<span class="t" style="left:1419.80px;top:255.05px;font-size:20.00px;line-height:20.00px;color:#d6d6d6;">2,4</span>
<span class="t" style="left:1451.44px;top:664.07px;font-size:20.00px;line-height:20.00px;color:#d6d6d6;">0</span>
<span class="t" style="left:1524.63px;top:664.07px;font-size:20.00px;line-height:20.00px;color:#d6d6d6;">10</span>
<span class="t" style="left:1603.38px;top:664.07px;font-size:20.00px;line-height:20.00px;color:#d6d6d6;">20</span>
<span class="t" style="left:1682.13px;top:664.07px;font-size:20.00px;line-height:20.00px;color:#d6d6d6;">30</span>
<span class="t" style="left:1760.88px;top:664.07px;font-size:20.00px;line-height:20.00px;color:#d6d6d6;">40</span>
<span class="t" style="left:1839.63px;top:664.07px;font-size:20.00px;line-height:20.00px;color:#d6d6d6;">50</span>
<span class="t" style="left:1918.38px;top:664.07px;font-size:20.00px;line-height:20.00px;color:#d6d6d6;">60</span>
<span class="t" style="left:1997.13px;top:664.07px;font-size:20.00px;line-height:20.00px;color:#d6d6d6;">70</span>
<span class="t" style="left:2075.88px;top:664.07px;font-size:20.00px;line-height:20.00px;color:#d6d6d6;">80</span>
<span class="t" style="left:2154.63px;top:664.07px;font-size:20.00px;line-height:20.00px;color:#d6d6d6;">90</span>
<span class="t" style="left:2227.82px;top:664.07px;font-size:20.00px;line-height:20.00px;color:#d6d6d6;">100</span>
<span class="t" style="left:1758.71px;top:190.07px;font-size:20.00px;line-height:20.00px;color:#d6d6d6;">Gamma Log/Log</span>
<div class="b" style="left:0.00px;top:765.00px;width:2293.00px;height:180.00px;background:#000000;"></div>
<div class="b" style="left:338.00px;top:765.00px;width:1756.00px;height:180.00px;background:#020202;"></div>
<div class="b" style="left:367.00px;top:773.00px;width:135.60px;height:141.00px;border:2px solid #f2f2f2;background:linear-gradient(to bottom,#060606 0%,#060606 49%,#000000 49.6%,#000000 100%);"></div>
<span class="t" style="left:429.72px;top:918.64px;font-size:17.20px;line-height:17.20px;color:#ffffff;transform:scaleX(1.05);">0</span>
<div class="b" style="left:524.90px;top:773.00px;width:135.60px;height:141.00px;border:2px solid #f2f2f2;background:linear-gradient(to bottom,#161616 0%,#161616 49%,#1e1e1e 49.6%,#1e1e1e 100%);"></div>
<span class="t" style="left:582.83px;top:918.64px;font-size:17.20px;line-height:17.20px;color:#ffffff;transform:scaleX(1.05);">10</span>
<div class="b" style="left:682.80px;top:773.00px;width:135.60px;height:141.00px;border:2px solid #f2f2f2;background:linear-gradient(to bottom,#303030 0%,#303030 49%,#343434 49.6%,#343434 100%);"></div>
<span class="t" style="left:740.73px;top:918.64px;font-size:17.20px;line-height:17.20px;color:#ffffff;transform:scaleX(1.05);">20</span>
<div class="b" style="left:840.70px;top:773.00px;width:135.60px;height:141.00px;border:2px solid #f2f2f2;background:linear-gradient(to bottom,#4a4a4a 0%,#4a4a4a 49%,#4d4d4d 49.6%,#4d4d4d 100%);"></div>
<span class="t" style="left:898.63px;top:918.64px;font-size:17.20px;line-height:17.20px;color:#ffffff;transform:scaleX(1.05);">30</span>
<div class="b" style="left:998.60px;top:773.00px;width:135.60px;height:141.00px;border:2px solid #f2f2f2;background:linear-gradient(to bottom,#646465 0%,#646465 49%,#666666 49.6%,#666666 100%);"></div>
<span class="t" style="left:1056.53px;top:918.64px;font-size:17.20px;line-height:17.20px;color:#ffffff;transform:scaleX(1.05);">40</span>
<div class="b" style="left:1156.50px;top:773.00px;width:135.60px;height:141.00px;border:2px solid #f2f2f2;background:linear-gradient(to bottom,#808183 0%,#808183 49%,#808080 49.6%,#808080 100%);"></div>
<span class="t" style="left:1214.43px;top:918.64px;font-size:17.20px;line-height:17.20px;color:#ffffff;transform:scaleX(1.05);">50</span>
<div class="b" style="left:1314.40px;top:773.00px;width:135.60px;height:141.00px;border:2px solid #f2f2f2;background:linear-gradient(to bottom,#9a9a9c 0%,#9a9a9c 49%,#999999 49.6%,#999999 100%);"></div>
<span class="t" style="left:1372.33px;top:918.64px;font-size:17.20px;line-height:17.20px;color:#ffffff;transform:scaleX(1.05);">60</span>
<div class="b" style="left:1472.30px;top:773.00px;width:135.60px;height:141.00px;border:2px solid #f2f2f2;background:linear-gradient(to bottom,#b1b2b5 0%,#b1b2b5 49%,#b3b3b3 49.6%,#b3b3b3 100%);"></div>
<span class="t" style="left:1530.23px;top:918.64px;font-size:17.20px;line-height:17.20px;color:#ffffff;transform:scaleX(1.05);">70</span>
<div class="b" style="left:1630.20px;top:773.00px;width:135.60px;height:141.00px;border:2px solid #f2f2f2;background:linear-gradient(to bottom,#cdcdd0 0%,#cdcdd0 49%,#cccccc 49.6%,#cccccc 100%);"></div>
<span class="t" style="left:1688.13px;top:918.64px;font-size:17.20px;line-height:17.20px;color:#ffffff;transform:scaleX(1.05);">80</span>
<div class="b" style="left:1788.10px;top:773.00px;width:135.60px;height:141.00px;border:2px solid #f2f2f2;background:linear-gradient(to bottom,#e5e5e8 0%,#e5e5e8 49%,#e6e6e6 49.6%,#e6e6e6 100%);"></div>
<span class="t" style="left:1846.03px;top:918.64px;font-size:17.20px;line-height:17.20px;color:#ffffff;transform:scaleX(1.05);">90</span>
<div class="b" style="left:1946.00px;top:773.00px;width:135.60px;height:141.00px;border:2px solid #f2f2f2;background:linear-gradient(to bottom,#f8f9fe 0%,#f8f9fe 49%,#fafafa 49.6%,#fafafa 100%);"></div>
<span class="t" style="left:1999.15px;top:918.64px;font-size:17.20px;line-height:17.20px;color:#ffffff;transform:scaleX(1.05);">100</span>
<span class="t" style="left:357.3px;top:804.2px;font-size:17.6px;line-height:17.6px;color:#fff;transform-origin:0 0;transform:rotate(-90deg) translate(-50%,-14.90px) scaleX(0.9608);">Actual</span>
<span class="t" style="left:357.3px;top:882.6px;font-size:17.6px;line-height:17.6px;color:#fff;transform-origin:0 0;transform:rotate(-90deg) translate(-50%,-14.90px) scaleX(0.9608);">Target</span>
<span class="t" style="left:19.50px;top:983.17px;font-size:41.50px;line-height:41.50px;color:#f0f0f0;transform:scaleX(0.9951);transform-origin:left center;-webkit-text-stroke:0.35px #f0f0f0;">Current Reading</span>
<span class="t" style="left:20.50px;top:1046.80px;font-size:34.50px;line-height:34.50px;color:#f0f0f0;-webkit-text-stroke:0.35px #f0f0f0;">x: 0,3094</span>
<span class="t" style="left:20.50px;top:1102.80px;font-size:34.50px;line-height:34.50px;color:#f0f0f0;-webkit-text-stroke:0.35px #f0f0f0;">y: 0,3245</span>
<span class="t" style="left:20.50px;top:1159.80px;font-size:34.50px;line-height:34.50px;color:#f0f0f0;transform:scaleX(0.9970);transform-origin:left center;-webkit-text-stroke:0.35px #f0f0f0;">fL: 164,06</span>
<span class="t" style="left:20.50px;top:1215.80px;font-size:34.50px;line-height:34.50px;color:#f0f0f0;transform:scaleX(1.0382);transform-origin:left center;-webkit-text-stroke:0.35px #f0f0f0;">cd/m²: 562,12</span>
<div class="b" style="left:450.50px;top:975.00px;width:401.50px;height:294.50px;background:#212121;"></div>
<div class="b" style="left:460.00px;top:984.20px;width:383.20px;height:279.60px;background:#333333;"></div>
<div class="b" style="left:511.50px;top:987.80px;width:327.70px;height:237.40px;background:radial-gradient(ellipse 62% 62% at 49.6% 49.8%,rgba(255,255,255,1) 0%,rgba(255,255,255,.82) 18%,rgba(255,255,255,.5) 45%,rgba(255,255,255,.18) 75%,rgba(255,255,255,0) 100%),conic-gradient(from 0deg at 49.6% 49.8%,#b4ffbc 0deg,#dcffb8 22deg,#ffffb4 38deg,#ffdca4 56deg,#ffb8a8 80deg,#ffa0a8 100deg,#ff7cae 126deg,#ff9cd8 150deg,#ffaeff 172deg,#d8b4ff 200deg,#acc4ff 234deg,#94dcff 258deg,#8cf6ff 274deg,#84f8c8 304deg,#98ffc0 332deg,#b4ffbc 360deg);"></div>
<span class="t" style="left:463.27px;top:997.57px;font-size:20.00px;line-height:20.00px;color:#d6d6d6;transform:scaleX(0.9891);transform-origin:right center;">0,35</span>
<span class="t" style="left:463.27px;top:1044.82px;font-size:20.00px;line-height:20.00px;color:#d6d6d6;transform:scaleX(0.9891);transform-origin:right center;">0,34</span>
<span class="t" style="left:463.27px;top:1092.07px;font-size:20.00px;line-height:20.00px;color:#d6d6d6;transform:scaleX(0.9891);transform-origin:right center;">0,33</span>
<span class="t" style="left:463.27px;top:1139.32px;font-size:20.00px;line-height:20.00px;color:#d6d6d6;transform:scaleX(0.9891);transform-origin:right center;">0,32</span>
<span class="t" style="left:463.27px;top:1186.57px;font-size:20.00px;line-height:20.00px;color:#d6d6d6;transform:scaleX(0.9891);transform-origin:right center;">0,31</span>
<span class="t" style="left:505.44px;top:1237.37px;font-size:20.00px;line-height:20.00px;color:#d6d6d6;transform:scaleX(0.9891);transform-origin:center center;">0,29</span>
<span class="t" style="left:576.30px;top:1237.37px;font-size:20.00px;line-height:20.00px;color:#d6d6d6;transform:scaleX(0.9891);transform-origin:center center;">0,3</span>
<span class="t" style="left:636.04px;top:1237.37px;font-size:20.00px;line-height:20.00px;color:#d6d6d6;transform:scaleX(0.9891);transform-origin:center center;">0,31</span>
<span class="t" style="left:701.34px;top:1237.37px;font-size:20.00px;line-height:20.00px;color:#d6d6d6;transform:scaleX(0.9891);transform-origin:center center;">0,32</span>
<span class="t" style="left:766.64px;top:1237.37px;font-size:20.00px;line-height:20.00px;color:#d6d6d6;transform:scaleX(0.9891);transform-origin:center center;">0,33</span>
<div class="b" style="left:861.40px;top:955.70px;width:1320.90px;height:288.31px;background:#080808;"></div>
<div class="b" style="left:863.00px;top:958.00px;width:1317.50px;height:38.00px;background:linear-gradient(to bottom,#323232 0%,#2e2e2e 50%,#1d1d1d 52%,#141414 100%);"></div>
<span class="t" style="left:1116.87px;top:967.56px;font-size:20.60px;line-height:20.60px;color:#ffffff;">0</span>
<span class="t" style="left:1211.81px;top:967.56px;font-size:20.60px;line-height:20.60px;color:#ffffff;">10</span>
<span class="t" style="left:1312.48px;top:967.56px;font-size:20.60px;line-height:20.60px;color:#ffffff;">20</span>
<span class="t" style="left:1413.15px;top:967.56px;font-size:20.60px;line-height:20.60px;color:#ffffff;">30</span>
<span class="t" style="left:1513.82px;top:967.56px;font-size:20.60px;line-height:20.60px;color:#ffffff;">40</span>
<span class="t" style="left:1614.49px;top:967.56px;font-size:20.60px;line-height:20.60px;color:#ffffff;">50</span>
<span class="t" style="left:1715.16px;top:967.56px;font-size:20.60px;line-height:20.60px;color:#ffffff;">60</span>
<span class="t" style="left:1815.83px;top:967.56px;font-size:20.60px;line-height:20.60px;color:#ffffff;">70</span>
<span class="t" style="left:1916.50px;top:967.56px;font-size:20.60px;line-height:20.60px;color:#ffffff;">80</span>
<span class="t" style="left:2017.17px;top:967.56px;font-size:20.60px;line-height:20.60px;color:#ffffff;">90</span>
<span class="t" style="left:2112.11px;top:967.56px;font-size:20.60px;line-height:20.60px;color:#ffffff;">100</span>
<div class="b" style="left:863.00px;top:996.00px;width:1317.50px;height:35.43px;background:#424242;"></div>
<span class="t" style="left:879.60px;top:1003.76px;font-size:21.90px;line-height:21.90px;color:#ffffff;font-weight:bold;transform:scaleX(0.9442);transform-origin:left center;">x: CIE31</span>
<span class="t" style="left:1077.90px;top:1003.76px;font-size:21.90px;line-height:21.90px;color:#ffffff;transform:scaleX(0.9720);transform-origin:left center;">0,302</span>
<span class="t" style="left:1178.57px;top:1003.76px;font-size:21.90px;line-height:21.90px;color:#ffffff;transform:scaleX(0.9720);transform-origin:left center;">0,309</span>
<span class="t" style="left:1279.24px;top:1003.76px;font-size:21.90px;line-height:21.90px;color:#ffffff;transform:scaleX(0.9720);transform-origin:left center;">0,311</span>
<span class="t" style="left:1379.91px;top:1003.76px;font-size:21.90px;line-height:21.90px;color:#ffffff;transform:scaleX(0.9720);transform-origin:left center;">0,311</span>
<span class="t" style="left:1480.58px;top:1003.76px;font-size:21.90px;line-height:21.90px;color:#ffffff;transform:scaleX(0.9720);transform-origin:left center;">0,310</span>
<span class="t" style="left:1581.25px;top:1003.76px;font-size:21.90px;line-height:21.90px;color:#ffffff;transform:scaleX(0.9720);transform-origin:left center;">0,310</span>
<span class="t" style="left:1681.92px;top:1003.76px;font-size:21.90px;line-height:21.90px;color:#ffffff;transform:scaleX(0.9720);transform-origin:left center;">0,311</span>
<span class="t" style="left:1782.59px;top:1003.76px;font-size:21.90px;line-height:21.90px;color:#ffffff;transform:scaleX(0.9720);transform-origin:left center;">0,310</span>
<span class="t" style="left:1883.26px;top:1003.76px;font-size:21.90px;line-height:21.90px;color:#ffffff;transform:scaleX(0.9720);transform-origin:left center;">0,310</span>
<span class="t" style="left:1983.93px;top:1003.76px;font-size:21.90px;line-height:21.90px;color:#ffffff;transform:scaleX(0.9720);transform-origin:left center;">0,310</span>
<span class="t" style="left:2084.60px;top:1003.76px;font-size:21.90px;line-height:21.90px;color:#ffffff;transform:scaleX(0.9720);transform-origin:left center;">0,309</span>
<div class="b" style="left:863.00px;top:1031.43px;width:1317.50px;height:35.43px;background:#828282;"></div>
<span class="t" style="left:879.60px;top:1039.19px;font-size:21.90px;line-height:21.90px;color:#f0f0f0;font-weight:bold;transform:scaleX(0.9442);transform-origin:left center;">y: CIE31</span>
<span class="t" style="left:1077.90px;top:1039.19px;font-size:21.90px;line-height:21.90px;color:#f0f0f0;transform:scaleX(0.9720);transform-origin:left center;">0,275</span>
<span class="t" style="left:1178.57px;top:1039.19px;font-size:21.90px;line-height:21.90px;color:#f0f0f0;transform:scaleX(0.9720);transform-origin:left center;">0,320</span>
<span class="t" style="left:1279.24px;top:1039.19px;font-size:21.90px;line-height:21.90px;color:#f0f0f0;transform:scaleX(0.9720);transform-origin:left center;">0,326</span>
<span class="t" style="left:1379.91px;top:1039.19px;font-size:21.90px;line-height:21.90px;color:#f0f0f0;transform:scaleX(0.9720);transform-origin:left center;">0,326</span>
<span class="t" style="left:1480.58px;top:1039.19px;font-size:21.90px;line-height:21.90px;color:#f0f0f0;transform:scaleX(0.9720);transform-origin:left center;">0,325</span>
<span class="t" style="left:1581.25px;top:1039.19px;font-size:21.90px;line-height:21.90px;color:#f0f0f0;transform:scaleX(0.9720);transform-origin:left center;">0,326</span>
<span class="t" style="left:1681.92px;top:1039.19px;font-size:21.90px;line-height:21.90px;color:#f0f0f0;transform:scaleX(0.9720);transform-origin:left center;">0,326</span>
<span class="t" style="left:1782.59px;top:1039.19px;font-size:21.90px;line-height:21.90px;color:#f0f0f0;transform:scaleX(0.9720);transform-origin:left center;">0,325</span>
<span class="t" style="left:1883.26px;top:1039.19px;font-size:21.90px;line-height:21.90px;color:#f0f0f0;transform:scaleX(0.9720);transform-origin:left center;">0,325</span>
<span class="t" style="left:1983.93px;top:1039.19px;font-size:21.90px;line-height:21.90px;color:#f0f0f0;transform:scaleX(0.9720);transform-origin:left center;">0,325</span>
<span class="t" style="left:2084.60px;top:1039.19px;font-size:21.90px;line-height:21.90px;color:#f0f0f0;transform:scaleX(0.9720);transform-origin:left center;">0,325</span>
<div class="b" style="left:863.00px;top:1066.86px;width:1317.50px;height:35.43px;background:#424242;"></div>
<span class="t" style="left:879.60px;top:1074.62px;font-size:21.90px;line-height:21.90px;color:#ffffff;font-weight:bold;">Y</span>
<span class="t" style="left:1077.90px;top:1074.62px;font-size:21.90px;line-height:21.90px;color:#ffffff;transform:scaleX(0.9720);transform-origin:left center;">0,513</span>
<span class="t" style="left:1178.57px;top:1074.62px;font-size:21.90px;line-height:21.90px;color:#ffffff;transform:scaleX(0.9720);transform-origin:left center;">3,795</span>
<span class="t" style="left:1279.24px;top:1074.62px;font-size:21.90px;line-height:21.90px;color:#ffffff;transform:scaleX(0.9720);transform-origin:left center;">15,924</span>
<span class="t" style="left:1379.91px;top:1074.62px;font-size:21.90px;line-height:21.90px;color:#ffffff;transform:scaleX(0.9720);transform-origin:left center;">38,260</span>
<span class="t" style="left:1480.58px;top:1074.62px;font-size:21.90px;line-height:21.90px;color:#ffffff;transform:scaleX(0.9720);transform-origin:left center;">72,387</span>
<span class="t" style="left:1581.25px;top:1074.62px;font-size:21.90px;line-height:21.90px;color:#ffffff;transform:scaleX(0.9720);transform-origin:left center;">121,382</span>
<span class="t" style="left:1681.92px;top:1074.62px;font-size:21.90px;line-height:21.90px;color:#ffffff;transform:scaleX(0.9720);transform-origin:left center;">181,669</span>
<span class="t" style="left:1782.59px;top:1074.62px;font-size:21.90px;line-height:21.90px;color:#ffffff;transform:scaleX(0.9720);transform-origin:left center;">249,956</span>
<span class="t" style="left:1883.26px;top:1074.62px;font-size:21.90px;line-height:21.90px;color:#ffffff;transform:scaleX(0.9720);transform-origin:left center;">339,455</span>
<span class="t" style="left:1983.93px;top:1074.62px;font-size:21.90px;line-height:21.90px;color:#ffffff;transform:scaleX(0.9720);transform-origin:left center;">446,627</span>
<span class="t" style="left:2084.60px;top:1074.62px;font-size:21.90px;line-height:21.90px;color:#ffffff;transform:scaleX(0.9720);transform-origin:left center;">562,121</span>
<div class="b" style="left:863.00px;top:1102.29px;width:1317.50px;height:35.43px;background:#828282;"></div>
<span class="t" style="left:879.60px;top:1110.05px;font-size:21.90px;line-height:21.90px;color:#f0f0f0;font-weight:bold;transform:scaleX(0.9953);transform-origin:left center;">Target Y</span>
<span class="t" style="left:1077.90px;top:1110.05px;font-size:21.90px;line-height:21.90px;color:#f0f0f0;transform:scaleX(0.9720);transform-origin:left center;">0,000</span>
<span class="t" style="left:1178.57px;top:1110.05px;font-size:21.90px;line-height:21.90px;color:#f0f0f0;transform:scaleX(0.9720);transform-origin:left center;">5,807</span>
<span class="t" style="left:1279.24px;top:1110.05px;font-size:21.90px;line-height:21.90px;color:#f0f0f0;transform:scaleX(0.9720);transform-origin:left center;">18,609</span>
<span class="t" style="left:1379.91px;top:1110.05px;font-size:21.90px;line-height:21.90px;color:#f0f0f0;transform:scaleX(0.9720);transform-origin:left center;">40,626</span>
<span class="t" style="left:1480.58px;top:1110.05px;font-size:21.90px;line-height:21.90px;color:#f0f0f0;transform:scaleX(0.9720);transform-origin:left center;">74,688</span>
<span class="t" style="left:1581.25px;top:1110.05px;font-size:21.90px;line-height:21.90px;color:#f0f0f0;transform:scaleX(0.9720);transform-origin:left center;">121,340</span>
<span class="t" style="left:1681.92px;top:1110.05px;font-size:21.90px;line-height:21.90px;color:#f0f0f0;transform:scaleX(0.9720);transform-origin:left center;">179,062</span>
<span class="t" style="left:1782.59px;top:1110.05px;font-size:21.90px;line-height:21.90px;color:#f0f0f0;transform:scaleX(0.9720);transform-origin:left center;">250,257</span>
<span class="t" style="left:1883.26px;top:1110.05px;font-size:21.90px;line-height:21.90px;color:#f0f0f0;transform:scaleX(0.9720);transform-origin:left center;">339,424</span>
<span class="t" style="left:1983.93px;top:1110.05px;font-size:21.90px;line-height:21.90px;color:#f0f0f0;transform:scaleX(0.9720);transform-origin:left center;">444,805</span>
<span class="t" style="left:2084.60px;top:1110.05px;font-size:21.90px;line-height:21.90px;color:#f0f0f0;transform:scaleX(0.9720);transform-origin:left center;">562,121</span>
<div class="b" style="left:863.00px;top:1137.72px;width:1317.50px;height:35.43px;background:#424242;"></div>
<span class="t" style="left:879.60px;top:1145.48px;font-size:21.90px;line-height:21.90px;color:#ffffff;font-weight:bold;transform:scaleX(1.0129);transform-origin:left center;">Gamma Log/Log</span>
<span class="t" style="left:1077.90px;top:1145.48px;font-size:21.90px;line-height:21.90px;color:#ffffff;transform:scaleX(0.9720);transform-origin:left center;">1,278</span>
<span class="t" style="left:1178.57px;top:1145.48px;font-size:21.90px;line-height:21.90px;color:#ffffff;transform:scaleX(0.9720);transform-origin:left center;">2,189</span>
<span class="t" style="left:1279.24px;top:1145.48px;font-size:21.90px;line-height:21.90px;color:#ffffff;transform:scaleX(0.9720);transform-origin:left center;">2,214</span>
<span class="t" style="left:1379.91px;top:1145.48px;font-size:21.90px;line-height:21.90px;color:#ffffff;transform:scaleX(0.9720);transform-origin:left center;">2,220</span>
<span class="t" style="left:1480.58px;top:1145.48px;font-size:21.90px;line-height:21.90px;color:#ffffff;transform:scaleX(0.9720);transform-origin:left center;">2,237</span>
<span class="t" style="left:1581.25px;top:1145.48px;font-size:21.90px;line-height:21.90px;color:#ffffff;transform:scaleX(0.9720);transform-origin:left center;">2,224</span>
<span class="t" style="left:1681.92px;top:1145.48px;font-size:21.90px;line-height:21.90px;color:#ffffff;transform:scaleX(0.9720);transform-origin:left center;">2,211</span>
<span class="t" style="left:1782.59px;top:1145.48px;font-size:21.90px;line-height:21.90px;color:#ffffff;transform:scaleX(0.9720);transform-origin:left center;">2,254</span>
<span class="t" style="left:1883.26px;top:1145.48px;font-size:21.90px;line-height:21.90px;color:#ffffff;transform:scaleX(0.9720);transform-origin:left center;">2,260</span>
<span class="t" style="left:1983.93px;top:1145.48px;font-size:21.90px;line-height:21.90px;color:#ffffff;transform:scaleX(0.9720);transform-origin:left center;">2,229</span>
<span class="t" style="left:2084.60px;top:1145.48px;font-size:21.90px;line-height:21.90px;color:#ffffff;transform:scaleX(0.9720);transform-origin:left center;">2,275</span>
<div class="b" style="left:863.00px;top:1173.15px;width:1317.50px;height:35.43px;background:#828282;"></div>
<span class="t" style="left:879.60px;top:1180.91px;font-size:21.90px;line-height:21.90px;color:#f0f0f0;font-weight:bold;transform:scaleX(0.9065);transform-origin:left center;">CCT</span>
<span class="t" style="left:1077.90px;top:1180.91px;font-size:21.90px;line-height:21.90px;color:#f0f0f0;transform:scaleX(0.9720);transform-origin:left center;">8261,000</span>
<span class="t" style="left:1178.57px;top:1180.91px;font-size:21.90px;line-height:21.90px;color:#f0f0f0;transform:scaleX(0.9720);transform-origin:left center;">6770,000</span>
<span class="t" style="left:1279.24px;top:1180.91px;font-size:21.90px;line-height:21.90px;color:#f0f0f0;transform:scaleX(0.9720);transform-origin:left center;">6642,000</span>
<span class="t" style="left:1379.91px;top:1180.91px;font-size:21.90px;line-height:21.90px;color:#f0f0f0;transform:scaleX(0.9720);transform-origin:left center;">6648,000</span>
<span class="t" style="left:1480.58px;top:1180.91px;font-size:21.90px;line-height:21.90px;color:#f0f0f0;transform:scaleX(0.9720);transform-origin:left center;">6698,000</span>
<span class="t" style="left:1581.25px;top:1180.91px;font-size:21.90px;line-height:21.90px;color:#f0f0f0;transform:scaleX(0.9720);transform-origin:left center;">6678,000</span>
<span class="t" style="left:1681.92px;top:1180.91px;font-size:21.90px;line-height:21.90px;color:#f0f0f0;transform:scaleX(0.9720);transform-origin:left center;">6628,000</span>
<span class="t" style="left:1782.59px;top:1180.91px;font-size:21.90px;line-height:21.90px;color:#f0f0f0;transform:scaleX(0.9720);transform-origin:left center;">6692,000</span>
<span class="t" style="left:1883.26px;top:1180.91px;font-size:21.90px;line-height:21.90px;color:#f0f0f0;transform:scaleX(0.9720);transform-origin:left center;">6704,000</span>
<span class="t" style="left:1983.93px;top:1180.91px;font-size:21.90px;line-height:21.90px;color:#f0f0f0;transform:scaleX(0.9720);transform-origin:left center;">6696,000</span>
<span class="t" style="left:2084.60px;top:1180.91px;font-size:21.90px;line-height:21.90px;color:#f0f0f0;transform:scaleX(0.9720);transform-origin:left center;">6725,000</span>
<div class="b" style="left:863.00px;top:1208.58px;width:1317.50px;height:35.43px;background:#424242;"></div>
<span class="t" style="left:879.60px;top:1216.34px;font-size:21.90px;line-height:21.90px;color:#ffffff;font-weight:bold;transform:scaleX(0.9959);transform-origin:left center;">ΔE 2000</span>
<span class="t" style="left:1077.90px;top:1216.34px;font-size:21.90px;line-height:21.90px;color:#ffffff;transform:scaleX(0.9720);transform-origin:left center;">1,092</span>
<span class="t" style="left:1178.57px;top:1216.34px;font-size:21.90px;line-height:21.90px;color:#ffffff;transform:scaleX(0.9720);transform-origin:left center;">2,131</span>
<span class="t" style="left:1279.24px;top:1216.34px;font-size:21.90px;line-height:21.90px;color:#ffffff;transform:scaleX(0.9720);transform-origin:left center;">1,427</span>
<span class="t" style="left:1379.91px;top:1216.34px;font-size:21.90px;line-height:21.90px;color:#ffffff;transform:scaleX(0.9720);transform-origin:left center;">0,987</span>
<span class="t" style="left:1480.58px;top:1216.34px;font-size:21.90px;line-height:21.90px;color:#ffffff;transform:scaleX(0.9720);transform-origin:left center;">1,139</span>
<span class="t" style="left:1581.25px;top:1216.34px;font-size:21.90px;line-height:21.90px;color:#ffffff;transform:scaleX(0.9720);transform-origin:left center;">1,093</span>
<span class="t" style="left:1681.92px;top:1216.34px;font-size:21.90px;line-height:21.90px;color:#ffffff;transform:scaleX(0.9720);transform-origin:left center;">1,053</span>
<span class="t" style="left:1782.59px;top:1216.34px;font-size:21.90px;line-height:21.90px;color:#ffffff;transform:scaleX(0.9720);transform-origin:left center;">1,656</span>
<span class="t" style="left:1883.26px;top:1216.34px;font-size:21.90px;line-height:21.90px;color:#ffffff;transform:scaleX(0.9720);transform-origin:left center;">2,033</span>
<span class="t" style="left:1983.93px;top:1216.34px;font-size:21.90px;line-height:21.90px;color:#ffffff;transform:scaleX(0.9720);transform-origin:left center;">2,118</span>
<span class="t" style="left:2084.60px;top:1216.34px;font-size:21.90px;line-height:21.90px;color:#ffffff;transform:scaleX(0.9720);transform-origin:left center;">2,368</span>
<div class="b" style="left:0.00px;top:1328.60px;width:2293.00px;height:64.00px;background:linear-gradient(to bottom,#4a4a4a 0%,#3a3a3a 22%,#2e2e2e 50%,#272727 100%);"></div>
<div class="b" style="left:0.00px;top:1390.20px;width:2293.00px;height:1.00px;background:#1e1e1e;"></div>
<div class="b" style="left:2.20px;top:1328.80px;width:150.00px;height:61.60px;background:linear-gradient(to bottom,#a4a4a4 0%,#868686 50%,#5e5e5e 100%);border-radius:6px 6px 4px 4px;box-shadow:inset 0 1px 0 #acacac;"></div>
<div class="b" style="left:6.80px;top:1334.00px;width:140.40px;height:36.20px;background:#000000;border-radius:4px;box-shadow:inset 0 1px 2px rgba(0,0,0,.35);"></div>
<span class="t" style="left:74.25px;top:1375.83px;font-size:10.60px;line-height:10.60px;color:#2c3038;font-weight:bold;">0</span>
<div class="b" style="left:154.20px;top:1328.80px;width:150.00px;height:61.60px;background:linear-gradient(to bottom,#a4a4a4 0%,#868686 50%,#5e5e5e 100%);border-radius:6px 6px 4px 4px;box-shadow:inset 0 1px 0 #acacac;"></div>
<div class="b" style="left:158.80px;top:1334.00px;width:140.40px;height:36.20px;background:#1a1a1a;border-radius:4px;box-shadow:inset 0 1px 2px rgba(0,0,0,.35);"></div>
<span class="t" style="left:223.30px;top:1375.83px;font-size:10.60px;line-height:10.60px;color:#2c3038;font-weight:bold;">10</span>
<div class="b" style="left:306.20px;top:1328.80px;width:150.00px;height:61.60px;background:linear-gradient(to bottom,#a4a4a4 0%,#868686 50%,#5e5e5e 100%);border-radius:6px 6px 4px 4px;box-shadow:inset 0 1px 0 #acacac;"></div>
<div class="b" style="left:310.80px;top:1334.00px;width:140.40px;height:36.20px;background:#333333;border-radius:4px;box-shadow:inset 0 1px 2px rgba(0,0,0,.35);"></div>
<span class="t" style="left:375.30px;top:1375.83px;font-size:10.60px;line-height:10.60px;color:#2c3038;font-weight:bold;">20</span>
<div class="b" style="left:458.20px;top:1328.80px;width:150.00px;height:61.60px;background:linear-gradient(to bottom,#a4a4a4 0%,#868686 50%,#5e5e5e 100%);border-radius:6px 6px 4px 4px;box-shadow:inset 0 1px 0 #acacac;"></div>
<div class="b" style="left:462.80px;top:1334.00px;width:140.40px;height:36.20px;background:#4d4d4d;border-radius:4px;box-shadow:inset 0 1px 2px rgba(0,0,0,.35);"></div>
<span class="t" style="left:527.30px;top:1375.83px;font-size:10.60px;line-height:10.60px;color:#2c3038;font-weight:bold;">30</span>
<div class="b" style="left:610.20px;top:1328.80px;width:150.00px;height:61.60px;background:linear-gradient(to bottom,#a4a4a4 0%,#868686 50%,#5e5e5e 100%);border-radius:6px 6px 4px 4px;box-shadow:inset 0 1px 0 #acacac;"></div>
<div class="b" style="left:614.80px;top:1334.00px;width:140.40px;height:36.20px;background:#666666;border-radius:4px;box-shadow:inset 0 1px 2px rgba(0,0,0,.35);"></div>
<span class="t" style="left:679.30px;top:1375.83px;font-size:10.60px;line-height:10.60px;color:#2c3038;font-weight:bold;">40</span>
<div class="b" style="left:762.20px;top:1328.80px;width:150.00px;height:61.60px;background:linear-gradient(to bottom,#a4a4a4 0%,#868686 50%,#5e5e5e 100%);border-radius:6px 6px 4px 4px;box-shadow:inset 0 1px 0 #acacac;"></div>
<div class="b" style="left:766.80px;top:1334.00px;width:140.40px;height:36.20px;background:#808080;border-radius:4px;box-shadow:inset 0 1px 2px rgba(0,0,0,.35);"></div>
<span class="t" style="left:831.30px;top:1375.83px;font-size:10.60px;line-height:10.60px;color:#2c3038;font-weight:bold;">50</span>
<div class="b" style="left:914.20px;top:1328.80px;width:150.00px;height:61.60px;background:linear-gradient(to bottom,#a4a4a4 0%,#868686 50%,#5e5e5e 100%);border-radius:6px 6px 4px 4px;box-shadow:inset 0 1px 0 #acacac;"></div>
<div class="b" style="left:918.80px;top:1334.00px;width:140.40px;height:36.20px;background:#999999;border-radius:4px;box-shadow:inset 0 1px 2px rgba(0,0,0,.35);"></div>
<span class="t" style="left:983.30px;top:1375.83px;font-size:10.60px;line-height:10.60px;color:#2c3038;font-weight:bold;">60</span>
<div class="b" style="left:1066.20px;top:1328.80px;width:150.00px;height:61.60px;background:linear-gradient(to bottom,#a4a4a4 0%,#868686 50%,#5e5e5e 100%);border-radius:6px 6px 4px 4px;box-shadow:inset 0 1px 0 #acacac;"></div>
<div class="b" style="left:1070.80px;top:1334.00px;width:140.40px;height:36.20px;background:#b3b3b3;border-radius:4px;box-shadow:inset 0 1px 2px rgba(0,0,0,.35);"></div>
<span class="t" style="left:1135.30px;top:1375.83px;font-size:10.60px;line-height:10.60px;color:#2c3038;font-weight:bold;">70</span>
<div class="b" style="left:1218.20px;top:1328.80px;width:150.00px;height:61.60px;background:linear-gradient(to bottom,#a4a4a4 0%,#868686 50%,#5e5e5e 100%);border-radius:6px 6px 4px 4px;box-shadow:inset 0 1px 0 #acacac;"></div>
<div class="b" style="left:1222.80px;top:1334.00px;width:140.40px;height:36.20px;background:#cccccc;border-radius:4px;box-shadow:inset 0 1px 2px rgba(0,0,0,.35);"></div>
<span class="t" style="left:1287.30px;top:1375.83px;font-size:10.60px;line-height:10.60px;color:#2c3038;font-weight:bold;">80</span>
<div class="b" style="left:1370.20px;top:1328.80px;width:150.00px;height:61.60px;background:linear-gradient(to bottom,#a4a4a4 0%,#868686 50%,#5e5e5e 100%);border-radius:6px 6px 4px 4px;box-shadow:inset 0 1px 0 #acacac;"></div>
<div class="b" style="left:1374.80px;top:1334.00px;width:140.40px;height:36.20px;background:#e6e6e6;border-radius:4px;box-shadow:inset 0 1px 2px rgba(0,0,0,.35);"></div>
<span class="t" style="left:1439.30px;top:1375.83px;font-size:10.60px;line-height:10.60px;color:#2c3038;font-weight:bold;">90</span>
<div class="b" style="left:1522.20px;top:1328.80px;width:150.00px;height:61.60px;background:linear-gradient(to bottom,#1a1a1a 0%,#222222 40%,#3a3a3a 100%);border-radius:6px 6px 4px 4px;"></div>
<div class="b" style="left:1526.80px;top:1334.00px;width:140.40px;height:36.20px;background:#ffffff;border-radius:4px;box-shadow:inset 0 1px 2px rgba(0,0,0,.35);"></div>
<span class="t" style="left:1588.36px;top:1375.83px;font-size:10.60px;line-height:10.60px;color:#ffffff;font-weight:bold;">100</span>
<div class="b" style="left:1969.00px;top:1329.00px;width:48.50px;height:18.30px;background:linear-gradient(to bottom,#a6a6a6,#848484);border-radius:6px 0 0 0;"></div>
<div class="b" style="left:1969.00px;top:1348.20px;width:48.50px;height:42.00px;background:linear-gradient(to bottom,#8c8c8c 0%,#6e6e6e 60%,#606060 100%);border-radius:0 0 0 4px;"></div>
<div class="b" style="left:1986.40px;top:1331.20px;width:14.00px;height:14.00px;border-radius:50%;background:linear-gradient(to bottom,#8a8a8a,#a2a2a2);"></div>
<div class="b" style="left:2018.40px;top:1329.00px;width:45.40px;height:29.60px;background:linear-gradient(to bottom,#a8a8a8 0%,#8c8c8c 50%,#6c6c6c 100%);"></div>
<div class="b" style="left:2030.20px;top:1333.40px;width:21.00px;height:21.00px;border-radius:50%;background:linear-gradient(to bottom,#7e7e7e,#a4a4a4);"></div>
<div class="b" style="left:2063.65px;top:1329.00px;width:45.40px;height:29.60px;background:linear-gradient(to bottom,#a8a8a8 0%,#8c8c8c 50%,#6c6c6c 100%);"></div>
<div class="b" style="left:2075.45px;top:1333.40px;width:21.00px;height:21.00px;border-radius:50%;background:linear-gradient(to bottom,#7e7e7e,#a4a4a4);"></div>
<div class="b" style="left:2108.90px;top:1329.00px;width:45.40px;height:29.60px;background:linear-gradient(to bottom,#a8a8a8 0%,#8c8c8c 50%,#6c6c6c 100%);"></div>
<div class="b" style="left:2120.70px;top:1333.40px;width:21.00px;height:21.00px;border-radius:50%;background:linear-gradient(to bottom,#7e7e7e,#a4a4a4);"></div>
<div class="b" style="left:2154.15px;top:1329.00px;width:45.40px;height:29.60px;background:linear-gradient(to bottom,#a8a8a8 0%,#8c8c8c 50%,#6c6c6c 100%);"></div>
<div class="b" style="left:2165.95px;top:1333.40px;width:21.00px;height:21.00px;border-radius:50%;background:linear-gradient(to bottom,#7e7e7e,#a4a4a4);"></div>
<div class="b" style="left:2199.40px;top:1329.00px;width:45.40px;height:29.60px;background:linear-gradient(to bottom,#a8a8a8 0%,#8c8c8c 50%,#6c6c6c 100%);"></div>
<div class="b" style="left:2211.20px;top:1333.40px;width:21.00px;height:21.00px;border-radius:50%;background:linear-gradient(to bottom,#7e7e7e,#a4a4a4);"></div>
<div class="b" style="left:2017.00px;top:1329.00px;width:1.20px;height:29.60px;background:#4c4c4c;"></div>
<div class="b" style="left:2018.20px;top:1329.00px;width:1.00px;height:29.60px;background:rgba(255,255,255,.16);"></div>
<div class="b" style="left:2063.60px;top:1329.00px;width:1.20px;height:29.60px;background:#4c4c4c;"></div>
<div class="b" style="left:2064.80px;top:1329.00px;width:1.00px;height:29.60px;background:rgba(255,255,255,.16);"></div>
<div class="b" style="left:2109.00px;top:1329.00px;width:1.20px;height:29.60px;background:#4c4c4c;"></div>
<div class="b" style="left:2110.20px;top:1329.00px;width:1.00px;height:29.60px;background:rgba(255,255,255,.16);"></div>
<div class="b" style="left:2153.80px;top:1329.00px;width:1.20px;height:29.60px;background:#4c4c4c;"></div>
<div class="b" style="left:2155.00px;top:1329.00px;width:1.00px;height:29.60px;background:rgba(255,255,255,.16);"></div>
<div class="b" style="left:2199.00px;top:1329.00px;width:1.20px;height:29.60px;background:#4c4c4c;"></div>
<div class="b" style="left:2200.20px;top:1329.00px;width:1.00px;height:29.60px;background:rgba(255,255,255,.16);"></div>
<div class="b" style="left:2017.00px;top:1348.00px;width:1.20px;height:42.00px;background:#3c3c3c;"></div>
<div class="b" style="left:2244.40px;top:1329.00px;width:48.00px;height:30.50px;background:linear-gradient(to bottom,#2a2a2a,#333333);"></div>
<div class="b" style="left:2258.40px;top:1334.50px;width:19.00px;height:19.00px;border-radius:50%;background:linear-gradient(to bottom,#363636,#444444);"></div>
<div class="b" style="left:2018.40px;top:1360.00px;width:136.00px;height:30.00px;background:linear-gradient(to bottom,#a4a4a4 0%,#868686 50%,#606060 100%);border-radius:5px 0 0 0;"></div>
<div class="b" style="left:2155.20px;top:1360.00px;width:135.40px;height:30.00px;background:linear-gradient(to bottom,#a4a4a4 0%,#868686 50%,#606060 100%);border-radius:0 5px 0 0;"></div>
<div class="b" style="left:2038.50px;top:1365.50px;width:19.00px;height:19.00px;border-radius:50%;background:linear-gradient(to bottom,#7a7a7a,#9c9c9c);"></div>
<div class="b" style="left:2252.40px;top:1365.50px;width:19.00px;height:19.00px;border-radius:50%;background:linear-gradient(to bottom,#7a7a7a,#9c9c9c);"></div>
<svg width="2293" height="1392" viewBox="0 0 2293 1392" style="z-index:6">
<defs><linearGradient id="sqg" x1="0" y1="0" x2="0" y2="1"><stop offset="0" stop-color="#b6b6b6"/><stop offset="1" stop-color="#868686"/></linearGradient></defs>
<path d="M1989.2 1339.6l4.2-4.8 4.2 4.8z" fill="#2b2b2b"/>
<rect x="1978.6" y="1354.4" width="27.8" height="28" rx="4.5" fill="url(#sqg)" stroke="#262626" stroke-width="2.6"/>
<rect x="1985.8" y="1362.2" width="14" height="6.6" fill="#1e1e1e"/><rect x="1985.8" y="1368.8" width="14" height="6.6" fill="#000"/>
<rect x="2036.9" y="1339.8" width="8.2" height="8.2" fill="#2b2b2b"/>
<path d="M2083.6 1338.4v11l8.4-5.5z" fill="#2b2b2b"/>
<g fill="none" stroke="#2b2b2b" stroke-width="1.7"><path d="M2128.6 1338.6h-2.4v10.6h2.4M2134.8 1338.6h2.4v10.6h-2.4"/></g>
<rect x="2129.2" y="1343.2" width="1.7" height="1.7" fill="#2b2b2b"/><rect x="2132.4" y="1343.2" width="1.7" height="1.7" fill="#2b2b2b"/>
<path d="M2176.8 1343.9c-1.6-2.6-3-3.6-4.6-3.6a3.5 3.5 0 0 0 0 7c1.600 0 3-1 4.600-3.400c1.600-2.600 3-3.600 4.600-3.600a3.500 3.500 0 0 1 0 7c-1.600 0-3-1-4.600-3.400z" fill="none" stroke="#2b2b2b" stroke-width="1.7"/>
<g fill="none" stroke="#2b2b2b" stroke-width="2"><path d="M2216.6 1342.6a5.400 5.400 0 0 1 9.300-2.400"/><path d="M2227.400 1345.400a5.400 5.400 0 0 1 -9.300 2.400"/></g>
<path d="M2227.8 1337.200v4.600h-4.600z" fill="#2b2b2b"/><path d="M2216.200 1350.800v-4.600h4.600z" fill="#2b2b2b"/>
<g fill="none" stroke="#2b2b2b" stroke-width="1.5"><path d="M2047.4 1370.8l-3.600 4.200 3.600 4.200M2052 1370.800l-3.600 4.200 3.600 4.200"/><path d="M2258 1370.800l3.600 4.200-3.600 4.200M2262.600 1370.800l3.600 4.200-3.600 4.200"/></g>
</svg>
<span class="t" style="left:2074.80px;top:1365.12px;font-size:21.60px;line-height:21.60px;color:#2e2e2e;transform:scaleX(1.0829);transform-origin:left center;text-shadow:0 1px 0 rgba(255,255,255,.18);-webkit-text-stroke:0.4px #2e2e2e;">Back</span>
<span class="t" style="left:2181.00px;top:1365.12px;font-size:21.60px;line-height:21.60px;color:#2e2e2e;transform:scaleX(1.2046);transform-origin:left center;text-shadow:0 1px 0 rgba(255,255,255,.18);-webkit-text-stroke:0.4px #2e2e2e;">Next</span>
<div class="b" style="left:0.00px;top:0.00px;width:2293.00px;height:1.00px;background:#7b7b7b;z-index:20;"></div>
<div class="b" style="left:0.00px;top:0.00px;width:1.00px;height:1392.00px;background:#6e6e6e;z-index:20;"></div>
<div class="b" style="left:0.00px;top:1391.00px;width:2293.00px;height:1.00px;background:#7e7e7e;z-index:20;"></div>
<div class="b" style="left:2292.00px;top:0.00px;width:1.00px;height:1392.00px;background:#787878;z-index:20;"></div>
<div class="b" style="left:2286.00px;top:97.00px;width:6.00px;height:1231.60px;background:linear-gradient(to right,rgba(0,0,0,0) 0%,rgba(0,0,0,.12) 35%,rgba(0,0,0,.6) 100%);z-index:19;"></div>
</body></html>
